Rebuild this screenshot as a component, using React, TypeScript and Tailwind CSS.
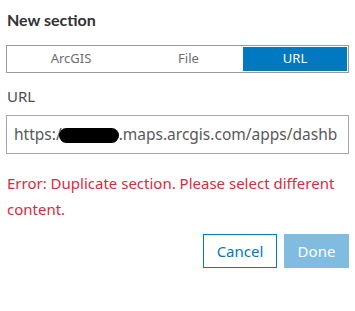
import React from 'react';

const tabs = ['ArcGIS', 'File', 'URL'];

export default function App() {
    const selected = 'URL';

    return (
        <div className="w-[355px] h-[311px] bg-white px-[6px] pt-[10px] font-['Noto_Sans',sans-serif]">
            {/* Titulo */}
            <h2 className="pl-px font-['Lato',sans-serif] text-[16px] leading-[20px] font-bold text-[#323232]">
                New section
            </h2>

            {/* Segmented control */}
            <div className="mt-[15px] flex h-[28px] border border-[#9a9a9a] p-px">
                {tabs.map((tab, i) => (
                    <button
                        key={tab}
                        className={
                            (i === 0 ? 'w-[126px] ' : i === 1 ? 'w-[109px] ' : 'flex-1 ') +
                            (tab === selected
                                ? 'bg-[#0079c1] text-white'
                                : 'bg-white text-[#6e6e6e]') +
                            ' flex items-center justify-center text-[13px]'
                        }
                    >
                        {tab}
                    </button>
                ))}
            </div>

            {/* Campo URL */}
            <div className="mt-[13px] pl-px text-[15px] leading-[20px] text-[#4c4c4c]">URL</div>
            <div className="mt-[9px] flex h-[39px] items-center border border-[#a6a6a6] pl-[7px] pr-[6px] text-[15.5px] text-[#595959]">
                <div className="overflow-hidden whitespace-nowrap">
                    https:/
                    <span className="ml-[-3px] inline-block h-[15px] w-[60px] translate-y-[3px] rounded-full bg-black align-baseline" />
                    .maps.arcgis.com/apps/dashb
                </div>
            </div>

            {/* Error */}
            <p className="mt-[16px] pl-px text-[15px] leading-[26px] text-[#dc2a3c]">
                Error: Duplicate section. Please select different content.
            </p>

            {/* Botones */}
            <div className="mt-[12px] flex justify-end gap-[7px]">
                <button className="h-[34px] w-[74px] border border-[#0079c1] bg-white text-[15px] text-[#0079c1]">
                    Cancel
                </button>
                <button disabled className="h-[34px] w-[65px] bg-[#80bce0] text-[15px] text-white">
                    Done
                </button>
            </div>
        </div>
    );
}
